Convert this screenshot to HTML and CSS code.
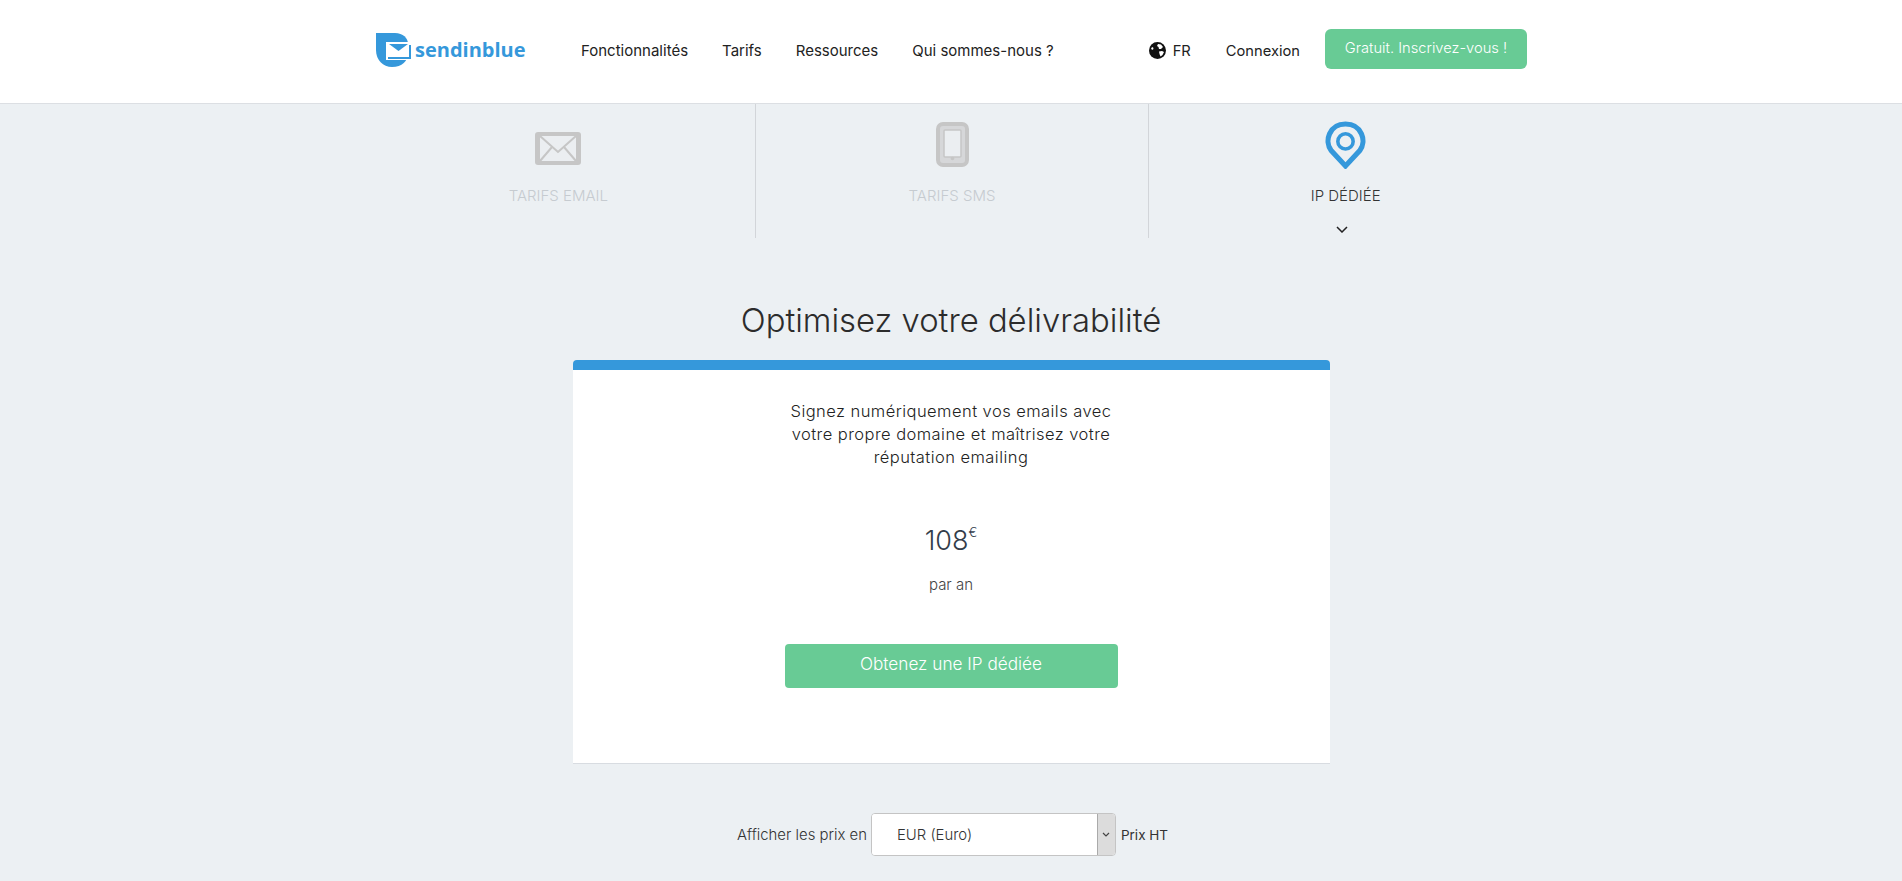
FILE: index.html
```html
<!DOCTYPE html>
<html lang="fr">
  <head>
    <meta charset="utf-8">
    <title>Tarifs - sendinblue</title>
    <link rel="stylesheet" href="styles.css">
  </head>
  <body>
<header class="topbar">
  <div class="topbar-inner">
    <a class="logo" href="#">
      <svg class="logo-icon" width="36" height="34" viewBox="0 0 36 34">
        <path fill="#3598db" d="M0 0H19C27 0 32 5 32 11V20C32 28 26 34 16 34C7 34 0 27 0 17Z"/>
        <rect x="10" y="9" width="25" height="18" fill="#fff"/>
        <path fill="#3598db" d="M13 11H32L22.500 18Z"/>
        <path fill="none" stroke="#3598db" stroke-width="2" d="M12 25H34V12"/>
      </svg>
      <span class="logo-text">sendinblue</span>
    </a>
    <nav class="mainnav">
      <a href="#">Fonctionnalités</a>
      <a href="#">Tarifs</a>
      <a href="#">Ressources</a>
      <a href="#">Qui sommes-nous ?</a>
    </nav>
    <div class="account">
      <a class="lang" href="#">
        <svg width="17" height="17" viewBox="0 0 17 17">
          <circle cx="8.500" cy="8.500" r="8.500" fill="#111"/>
          <path fill="#fff" d="M9 2L12 2.500L14 5L12 7L10 7L9.500 5L8 4ZM10 9.500L13 9L15 10L13.500 13L11.500 14.500L10.500 12ZM2 6L4 5L4.500 7L3 8Z"/>
        </svg>
        FR
      </a>
      <a href="#">Connexion</a>
      <a class="signup" href="#">Gratuit. Inscrivez-vous !</a>
    </div>
  </div>
</header>

<section class="tabs">
  <a class="tab" href="#">
    <span class="tab-icon">
      <svg class="icon-mail" width="46" height="33" viewBox="0 0 46 33">
        <rect width="46" height="33" rx="3" fill="#c6c6c6"/>
        <rect x="5" y="4" width="36" height="25" fill="#ebeef1"/>
        <path fill="none" stroke="#c6c6c6" stroke-width="2" d="M5 4L23 20L41 4M5 29L17 15M41 29L29 15"/>
      </svg>
    </span>
    <span class="tab-label">TARIFS EMAIL</span>
  </a>
  <a class="tab" href="#">
    <span class="tab-icon">
      <svg class="icon-phone" width="33" height="45" viewBox="0 0 33 45">
        <rect x="2" y="2" width="29" height="41" rx="5" fill="#d6d7d9" stroke="#c6c6c6" stroke-width="4"/>
        <rect x="8" y="8" width="17" height="27" rx="1" fill="#ebeef1" stroke="#c6c6c6" stroke-width="1.500"/>
        <circle cx="16.500" cy="36.500" r="1.800" fill="#c6c6c6"/>
      </svg>
    </span>
    <span class="tab-label">TARIFS SMS</span>
  </a>
  <a class="tab tab-active" href="#">
    <span class="tab-icon">
      <svg class="icon-pin" width="41" height="48" viewBox="0 0 40 47">
        <path fill="none" stroke="#3598db" stroke-width="5" d="M20 44L6 29C-1 20 4 3 20 3C36 3 41 20 34 29Z"/>
        <circle cx="20" cy="20" r="7.500" fill="none" stroke="#3598db" stroke-width="3.500"/>
      </svg>
    </span>
    <span class="tab-label">IP DÉDIÉE</span>
    <svg class="tab-arrow" width="12" height="7" viewBox="0 0 12 7">
      <path fill="none" stroke="#222" stroke-width="1.500" d="M1 1L6 6L11 1"/>
    </svg>
  </a>
</section>

<main class="pricing">
  <h1>Optimisez votre délivrabilité</h1>
  <div class="plan">
    <p class="plan-desc">Signez numériquement vos emails avec<br>votre propre domaine et maîtrisez votre<br>réputation emailing</p>
    <div class="plan-price">108<sup>€</sup></div>
    <div class="plan-period">par an</div>
    <a class="plan-button" href="#">Obtenez une IP dédiée</a>
  </div>
  <div class="currency">
    <label for="currency-select">Afficher les prix en</label>
    <div class="select-box">
      <select id="currency-select">
        <option>EUR (Euro)</option>
        <option>USD (Dollar)</option>
      </select>
      <span class="select-arrow">
        <svg width="8" height="5" viewBox="0 0 8 5">
          <path fill="none" stroke="#444" stroke-width="1.200" d="M1 1L4 4L7 1"/>
        </svg>
      </span>
    </div>
    <span class="currency-note">Prix HT</span>
  </div>
</main>
  </body>
</html>
```

FILE: styles.css
```css
html, body { margin: 0; height: 881px; overflow: hidden; }

body {
  background: #ecf0f3;
  color: #333;
  font-family: "Inter", "Open Sans", sans-serif;
}

a { color: inherit; text-decoration: none; }

/* top bar */
.topbar { background: #fff; border-bottom: 1px solid #dcdfe3; height: 103px; }
.topbar-inner { width: 1152px; margin: 0 auto; padding-left: 1px; height: 100%; display: flex; align-items: center; box-sizing: border-box; }

.logo { display: flex; align-items: center; gap: 3px; width: 205px; margin-top: -4px; }
.logo-icon { flex: none; }
.logo-text { font-family: "Open Sans", sans-serif; font-weight: 700; font-size: 20px; color: #3598db; }

.mainnav { display: flex; gap: 34px; font-size: 15px; color: #222; margin-top: -2px; }
.account { margin-left: auto; display: flex; align-items: center; gap: 35px; font-size: 14.700px; color: #222; margin-top: -2px; }
.lang { display: flex; align-items: center; gap: 7px; }
.signup { background: #68cb95; color: #fff; width: 202px; height: 40px; line-height: 38px; border-radius: 6px; text-align: center; margin: -4px 0 0 -10px; font-weight: 300; }

/* tabs */
.tabs { width: 1180px; height: 134px; margin: 0 auto; padding-left: 2px; display: flex; }
.tab { flex: 1; display: flex; flex-direction: column; align-items: center; color: #c6cbd0; border-left: 1px solid #d2d5d9; font-size: 15px; font-weight: 300; }
.tab:first-child { border-left: none; }
.tab-icon { height: 48px; margin-top: 18px; display: flex; align-items: center; }
.icon-mail { margin-top: 4px; }
.icon-phone { margin-bottom: 3px; }
.icon-pin { margin-bottom: 3px; }
.tab-label { margin-top: 16px; line-height: 20px; }
.tab-active { color: #333; }
.tab-arrow { margin: 20px 7px 0 0; }

/* pricing */
.pricing { display: flex; flex-direction: column; align-items: center; }
.pricing h1 { font-weight: 300; font-size: 32.800px; line-height: 40px; margin: 62px 0 20px; color: #2c2c2c; }

.plan {
  box-sizing: border-box;
  width: 757px;
  height: 404px;
  background: #fff;
  border-top: 10px solid #3598db;
  border-bottom: 1px solid #d8dce1;
  border-radius: 4px 4px 0 0;
  text-align: center;
}
.plan-desc { font-size: 16.500px; letter-spacing: .45px; font-weight: 300; line-height: 23px; margin: 30px 0 0; color: #222; }
.plan-price { font-size: 27px; font-weight: 300; line-height: 34px; margin-top: 55px; color: #333d4a; }
.plan-price sup { font-size: 13px; line-height: 0; vertical-align: 13px; }
.plan-period { font-size: 15px; font-weight: 300; line-height: 20px; margin-top: 17px; color: #444; }
.plan-button { display: block; width: 333px; height: 44px; line-height: 40px; margin: 49px auto 0; background: #68cb95; color: #fff; font-size: 17.200px; font-weight: 300; border-radius: 4px; }

/* currency */
.currency { display: flex; align-items: center; gap: 4px; margin-top: 49px; padding-left: 3px; font-size: 14.900px; font-weight: 300; color: #333; }
.currency-note { font-size: 13.500px; font-weight: 400; margin-left: 1px; }
.select-box { display: flex; width: 245px; height: 43px; box-sizing: border-box; background: #fff; border: 1px solid #c4c4c4; border-radius: 4px; overflow: hidden; }
.select-box select { flex: 1; appearance: none; border: none; outline: none; background: #fff; padding: 0 25px; font: inherit; color: #333; }
.select-arrow { width: 17px; background: #dcdcdc; border-left: 1px solid #aaa; display: flex; align-items: center; justify-content: center; }
```
